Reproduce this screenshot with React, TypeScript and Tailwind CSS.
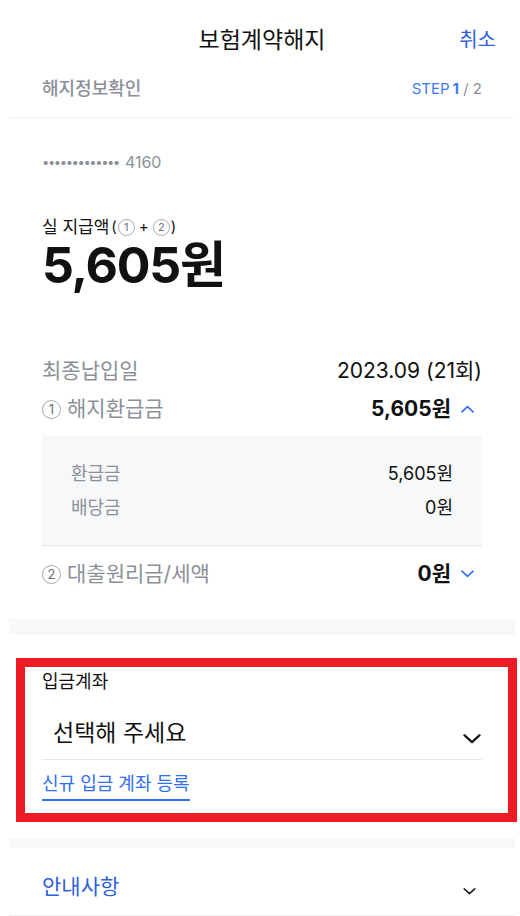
import React from 'react'

const font = { fontFamily: 'Inter, "Noto Sans CJK KR", sans-serif' }

function Chevron({ up = false, className = '' }: { up?: boolean; className?: string }) {
  return (
    <svg viewBox="0 0 14 8" fill="none" className={className}>
      <path
        d={up ? 'M1 7L7 1.5L13 7' : 'M1 1L7 6.5L13 1'}
        stroke="currentColor"
        strokeWidth="1.8"
        strokeLinecap="round"
        strokeLinejoin="round"
      />
    </svg>
  )
}

function Circled({ n, className = '' }: { n: string; className?: string }) {
  return (
    <span
      className={`inline-flex shrink-0 items-center justify-center rounded-full border border-[#a5a9b0] leading-none text-[#6b7078] ${className}`}
    >
      {n}
    </span>
  )
}

export default function App() {
  return (
    <div className="w-[520px] min-h-[916px] bg-white pl-[9px] pr-[5px] text-[#111]" style={font}>
      {/* nav */}
      <div className="relative flex h-[80px] items-center justify-center">
        <h1 className="text-[23px] font-normal">보험계약해지</h1>
        <button type="button" className="absolute right-[19px] text-[20px] text-[#2f5fdc]">
          취소
        </button>
      </div>

      <div className="flex h-[18px] items-center justify-between px-[33px] leading-[18px]">
        <span className="text-[18px] font-medium text-[#8b9098]">해지정보확인</span>
        <span className="text-[15px] text-[#3c7cf2]">
          STEP<b className="ml-[3px] font-bold">1</b>
          <span className="text-[#8b9098]"> / 2</span>
        </span>
      </div>
      <div className="mt-[19px] h-px bg-[#eef0f2]" />

      {/* summary */}
      <div className="px-[33px]">
        <p className="mt-[34px] flex items-center text-[16px] leading-[20px] text-[#8b9098]">
          <span className="text-[13px] tracking-[-1.4px]">•••••••••••••</span>
          <span className="ml-[6px]">4160</span>
        </p>

        <div className="mt-[44px] flex h-[22px] items-center text-[17px] leading-[20px]">
          <span>실 지급액</span>
          <span className="ml-[2px] text-[15px]">(</span>
          <Circled n="1" className="ml-[1px] h-[17px] w-[17px] text-[11px]" />
          <span className="mx-[4px] text-[15px]">+</span>
          <Circled n="2" className="h-[17px] w-[17px] text-[11px]" />
          <span className="ml-[1px] text-[15px]">)</span>
        </div>
        <p className="mt-[4px] text-[50px] font-bold leading-[46px] tracking-tight">5,605원</p>

        <div className="mt-[69px] flex h-[28px] items-center justify-between text-[21px]">
          <span className="text-[#8b9098]">최종납입일</span>
          <span>2023.09 (21회)</span>
        </div>
        <div className="mt-[10px] flex h-[28px] items-center justify-between text-[21px]">
          <span className="flex items-center gap-[6px] text-[#8b9098]">
            <Circled n="1" className="h-[19px] w-[19px] text-[13px]" />
            <span>해지환급금</span>
          </span>
          <span className="flex items-center gap-[10px] font-bold">
            <span>5,605원</span>
            <Chevron up className="mr-[8px] h-[8px] w-[13px] text-[#2f6ff0]" />
          </span>
        </div>

        <div className="mt-[13px] border-b border-[#e5e8eb] bg-[#f7f8fa] px-[29px] pt-[25px] pb-[26px] text-[18px]">
          <div className="flex h-[24px] items-center justify-between">
            <span className="text-[#8b9098]">환급금</span>
            <span>5,605원</span>
          </div>
          <div className="mt-[10px] flex h-[24px] items-center justify-between">
            <span className="text-[#8b9098]">배당금</span>
            <span>0원</span>
          </div>
        </div>

        <div className="mt-[14px] flex h-[28px] items-center justify-between text-[21px]">
          <span className="flex items-center gap-[6px] text-[#8b9098]">
            <Circled n="2" className="h-[19px] w-[19px] text-[13px]" />
            <span>대출원리금/세액</span>
          </span>
          <span className="flex items-center gap-[10px] font-bold">
            <span>0원</span>
            <Chevron className="mr-[8px] h-[8px] w-[13px] text-[#2f6ff0]" />
          </span>
        </div>
      </div>

      <div className="mt-[31px] h-[16px] bg-[#f7f8fa]" />

      {/* deposit account */}
      <section className="relative px-[33px] pt-[36px]">
        <p className="text-[18px] leading-[22px]">입금계좌</p>
        <div className="mt-[25px] flex items-center justify-between border-b border-[#e5e8eb] pb-[11px] pl-[11px]">
          <span className="text-[23px] leading-[30px]">선택해 주세요</span>
          <Chevron className="mt-[12px] h-[10px] w-[20px] text-[#111]" />
        </div>
        <button
          type="button"
          className="mt-[13px] border-b-2 border-[#2f6ff0] pb-[4px] text-[18px] leading-[22px] text-[#2f6ff0]"
        >
          신규 입금 계좌 등록
        </button>
        <div className="pointer-events-none absolute top-[23px] left-[7px] h-[164px] w-[501px] border-[9px] border-[#ed1c24]" />
      </section>

      <div className="mt-[37px] h-[10px] bg-[#f7f8fa]" />

      <div className="flex items-center justify-between border-b border-[#eef0f2] px-[33px] pt-[25px] pb-[14px]">
        <span className="text-[21px] leading-[28px] text-[#2f5fdc]">안내사항</span>
        <Chevron className="mt-[8px] mr-[6px] h-[7px] w-[13px] text-[#222]" />
      </div>
    </div>
  )
}
